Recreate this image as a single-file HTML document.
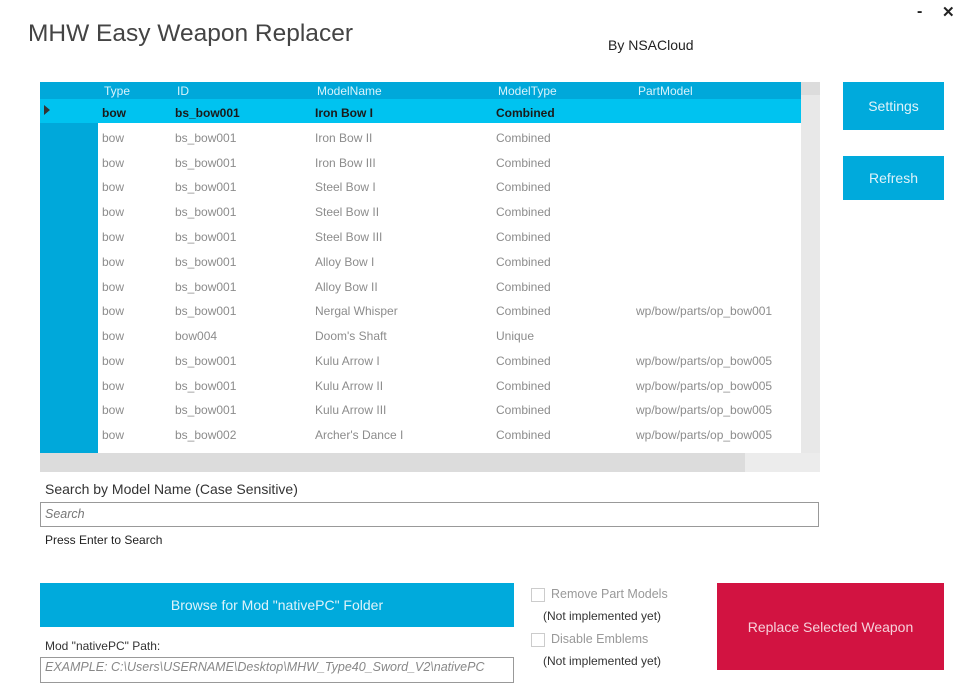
<!DOCTYPE html>
<html><head><meta charset="utf-8"><style>
body{margin:0;width:968px;height:676px;background:#fff;position:relative;overflow:hidden;font-family:"Liberation Sans",sans-serif;}
.a{position:absolute;white-space:nowrap;}
.row{position:absolute;left:98px;width:703px;height:25px;font-size:12px;color:#8c8c8c;}
.row span{position:absolute;top:6px;}
.btn{position:absolute;background:#00aadc;color:#dff3fa;font-size:14px;display:flex;align-items:center;justify-content:center;}
</style></head><body>
<div class="a" style="left:28px;top:20px;font-size:24.5px;color:#444;">MHW Easy Weapon Replacer</div>
<div class="a" style="left:608px;top:37px;font-size:14px;color:#222;">By NSACloud</div>
<div class="a" style="left:917px;top:3px;font-size:16px;font-weight:bold;color:#222;">-</div>
<div class="a" style="left:942px;top:3px;font-size:15px;font-weight:bold;color:#222;">✕</div>

<div class="a" style="left:40px;top:82px;width:761px;height:17px;background:#00a8da;"></div>
<div class="a" style="left:40px;top:82px;width:58px;height:371px;background:#00a8da;"></div>
<div class="a" style="left:40px;top:99px;width:761px;height:24px;background:#00c3f0;"></div>
<div class="a" style="left:801px;top:82px;width:19px;height:371px;background:#e8e8e8;"></div>
<div class="a" style="left:801px;top:82px;width:19px;height:13px;background:#dcdcdc;"></div>
<div class="a" style="left:40px;top:453px;width:705px;height:19px;background:#dcdcdc;"></div>
<div class="a" style="left:745px;top:453px;width:75px;height:19px;background:#ececec;"></div>
<div class="a" style="left:44px;top:105px;width:0;height:0;border-top:5px solid transparent;border-bottom:5px solid transparent;border-left:6px solid #333;"></div>
<div class="a" style="top:84px;left:0;font-size:12px;color:#d8f3fb;width:800px;height:14px;">
<span class="a" style="left:104px">Type</span><span class="a" style="left:177px">ID</span><span class="a" style="left:317px">ModelName</span><span class="a" style="left:498px">ModelType</span><span class="a" style="left:638px">PartModel</span></div>

<div class="row" style="top:100px;color:#1a1a1a;font-weight:bold;"><span style="left:4px">bow</span><span style="left:77px">bs_bow001</span><span style="left:217px">Iron Bow I</span><span style="left:398px">Combined</span></div>
<div class="row" style="top:125px"><span style="left:4px">bow</span><span style="left:77px">bs_bow001</span><span style="left:217px">Iron Bow II</span><span style="left:398px">Combined</span></div>
<div class="row" style="top:150px"><span style="left:4px">bow</span><span style="left:77px">bs_bow001</span><span style="left:217px">Iron Bow III</span><span style="left:398px">Combined</span></div>
<div class="row" style="top:174px"><span style="left:4px">bow</span><span style="left:77px">bs_bow001</span><span style="left:217px">Steel Bow I</span><span style="left:398px">Combined</span></div>
<div class="row" style="top:199px"><span style="left:4px">bow</span><span style="left:77px">bs_bow001</span><span style="left:217px">Steel Bow II</span><span style="left:398px">Combined</span></div>
<div class="row" style="top:224px"><span style="left:4px">bow</span><span style="left:77px">bs_bow001</span><span style="left:217px">Steel Bow III</span><span style="left:398px">Combined</span></div>
<div class="row" style="top:249px"><span style="left:4px">bow</span><span style="left:77px">bs_bow001</span><span style="left:217px">Alloy Bow I</span><span style="left:398px">Combined</span></div>
<div class="row" style="top:274px"><span style="left:4px">bow</span><span style="left:77px">bs_bow001</span><span style="left:217px">Alloy Bow II</span><span style="left:398px">Combined</span></div>
<div class="row" style="top:298px"><span style="left:4px">bow</span><span style="left:77px">bs_bow001</span><span style="left:217px">Nergal Whisper</span><span style="left:398px">Combined</span><span style="left:538px">wp/bow/parts/op_bow001</span></div>
<div class="row" style="top:323px"><span style="left:4px">bow</span><span style="left:77px">bow004</span><span style="left:217px">Doom's Shaft</span><span style="left:398px">Unique</span></div>
<div class="row" style="top:348px"><span style="left:4px">bow</span><span style="left:77px">bs_bow001</span><span style="left:217px">Kulu Arrow I</span><span style="left:398px">Combined</span><span style="left:538px">wp/bow/parts/op_bow005</span></div>
<div class="row" style="top:373px"><span style="left:4px">bow</span><span style="left:77px">bs_bow001</span><span style="left:217px">Kulu Arrow II</span><span style="left:398px">Combined</span><span style="left:538px">wp/bow/parts/op_bow005</span></div>
<div class="row" style="top:397px"><span style="left:4px">bow</span><span style="left:77px">bs_bow001</span><span style="left:217px">Kulu Arrow III</span><span style="left:398px">Combined</span><span style="left:538px">wp/bow/parts/op_bow005</span></div>
<div class="row" style="top:422px"><span style="left:4px">bow</span><span style="left:77px">bs_bow002</span><span style="left:217px">Archer's Dance I</span><span style="left:398px">Combined</span><span style="left:538px">wp/bow/parts/op_bow005</span></div>

<div class="btn" style="left:843px;top:82px;width:101px;height:48px;">Settings</div>
<div class="btn" style="left:843px;top:156px;width:101px;height:44px;">Refresh</div>

<div class="a" style="left:45px;top:481px;font-size:14px;color:#333;">Search by Model Name (Case Sensitive)</div>
<div class="a" style="left:40px;top:502px;width:777px;height:23px;border:1px solid #999;"></div>
<div class="a" style="left:45px;top:507px;font-size:12.5px;font-style:italic;color:#777;">Search</div>
<div class="a" style="left:45px;top:533px;font-size:12px;color:#222;">Press Enter to Search</div>

<div class="btn" style="left:40px;top:583px;width:474px;height:44px;">Browse for Mod "nativePC" Folder</div>
<div class="a" style="left:45px;top:639px;font-size:12px;color:#333;">Mod "nativePC" Path:</div>
<div class="a" style="left:40px;top:657px;width:472px;height:24px;border:1px solid #999;"></div>
<div class="a" style="left:45px;top:660px;font-size:12.5px;font-style:italic;color:#888;">EXAMPLE: C:\Users\USERNAME\Desktop\MHW_Type40_Sword_V2\nativePC</div>

<div class="a" style="left:531px;top:588px;width:12px;height:12px;border:1px solid #ccc;"></div>
<div class="a" style="left:551px;top:587px;font-size:12.5px;color:#999;">Remove Part Models</div>
<div class="a" style="left:543px;top:609px;font-size:12px;color:#333;">(Not implemented yet)</div>
<div class="a" style="left:531px;top:633px;width:12px;height:12px;border:1px solid #ccc;"></div>
<div class="a" style="left:551px;top:632px;font-size:12.5px;color:#999;">Disable Emblems</div>
<div class="a" style="left:543px;top:654px;font-size:12px;color:#333;">(Not implemented yet)</div>

<div class="btn" style="left:717px;top:583px;width:227px;height:87px;background:#d21341;color:#f6d0da;">Replace Selected Weapon</div>
</body></html>
